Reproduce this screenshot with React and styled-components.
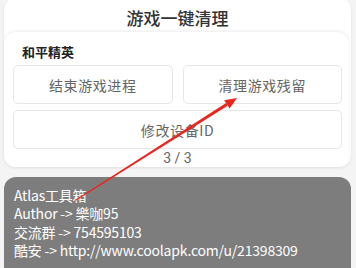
import React from 'react';
import styled, { createGlobalStyle } from 'styled-components';

const GlobalStyle = createGlobalStyle`
  html, body {
    margin: 0;
    padding: 0;
    background: #f4f4f4;
    font-family: "Noto Sans CJK SC", "Noto Sans", sans-serif;
  }
`;

const Page = styled.div`
  position: relative;
  width: 356px;
  height: 268px;
  overflow: hidden;
  padding: 0 5px 0 4px;
  box-sizing: border-box;
`;

const Panel = styled.div`
  margin-top: -2px;
  background: #fff;
  border-radius: 12px;
  box-shadow: 0 1px 3px rgba(0, 0, 0, 0.08);
`;

const Title = styled.div`
  padding: 10px 0 4px;
  line-height: 20px;
  text-align: center;
  font-size: 17px;
  font-weight: 500;
  color: #333;
`;

const Section = styled.div`
  margin-right: 2px;
  padding: 11px 7px 0 9px;
  background: #fff;
  border-radius: 12px;
  box-shadow: 0 -1px 3px rgba(0, 0, 0, 0.08);
`;

const Label = styled.div`
  padding-left: 9px;
  line-height: 18px;
  font-size: 13px;
  font-weight: 700;
  color: #222;
`;

const Grid = styled.div`
  margin-top: 4px;
  display: grid;
  grid-template-columns: 1fr 1fr;
  column-gap: 10px;
  row-gap: 6px;
`;

const Button = styled.div`
  grid-column: ${p => (p.wide ? '1 / span 2' : 'auto')};
  height: 39px;
  box-sizing: border-box;
  border: 1px solid #e6e6e6;
  border-radius: 5px;
  display: flex;
  align-items: center;
  justify-content: center;
  font-size: 14px;
  letter-spacing: 0.6px;
  color: #666;
`;

const Pager = styled.div`
  line-height: 18px;
  text-align: center;
  font-size: 14px;
  color: #666;
  font-family: "Roboto", "Noto Sans", sans-serif;
`;

const InfoBox = styled.div`
  margin-top: 10px;
  height: 110px;
  padding: 9px 10px;
  box-sizing: border-box;
  background: #7d7d7d;
  border-radius: 12px;
  color: #fff;
  font-size: 14px;
  letter-spacing: -0.2px;
  line-height: 18.3px;
`;

const Arrow = styled.svg`
  position: absolute;
  left: 0;
  top: 0;
  pointer-events: none;
`;

const info = [
  'Atlas工具箱',
  'Author -> 樂咖95',
  '交流群 -> 754595103',
  '酷安 -> http://www.coolapk.com/u/21398309',
];

export default function App() {
  return (
    <Page>
      <GlobalStyle />
      <Panel>
        <Title>游戏一键清理</Title>
        <Section>
          <Label>和平精英</Label>
          <Grid>
            <Button>结束游戏进程</Button>
            <Button>清理游戏残留</Button>
            <Button wide>修改设备ID</Button>
          </Grid>
          <Pager>3 / 3</Pager>
        </Section>
      </Panel>
      <InfoBox>
        {info.map(line => (
          <div key={line}>{line}</div>
        ))}
      </InfoBox>
      <Arrow width="356" height="268" viewBox="0 0 356 268">
        <polygon
          points="76.3,200.4 227.7,105.7 226.1,103.1 75.7,199.6"
          fill="#e8261e"
        />
        <polygon points="237,98 229.6,108.6 224.2,100.2" fill="#e8261e" />
      </Arrow>
    </Page>
  );
}
